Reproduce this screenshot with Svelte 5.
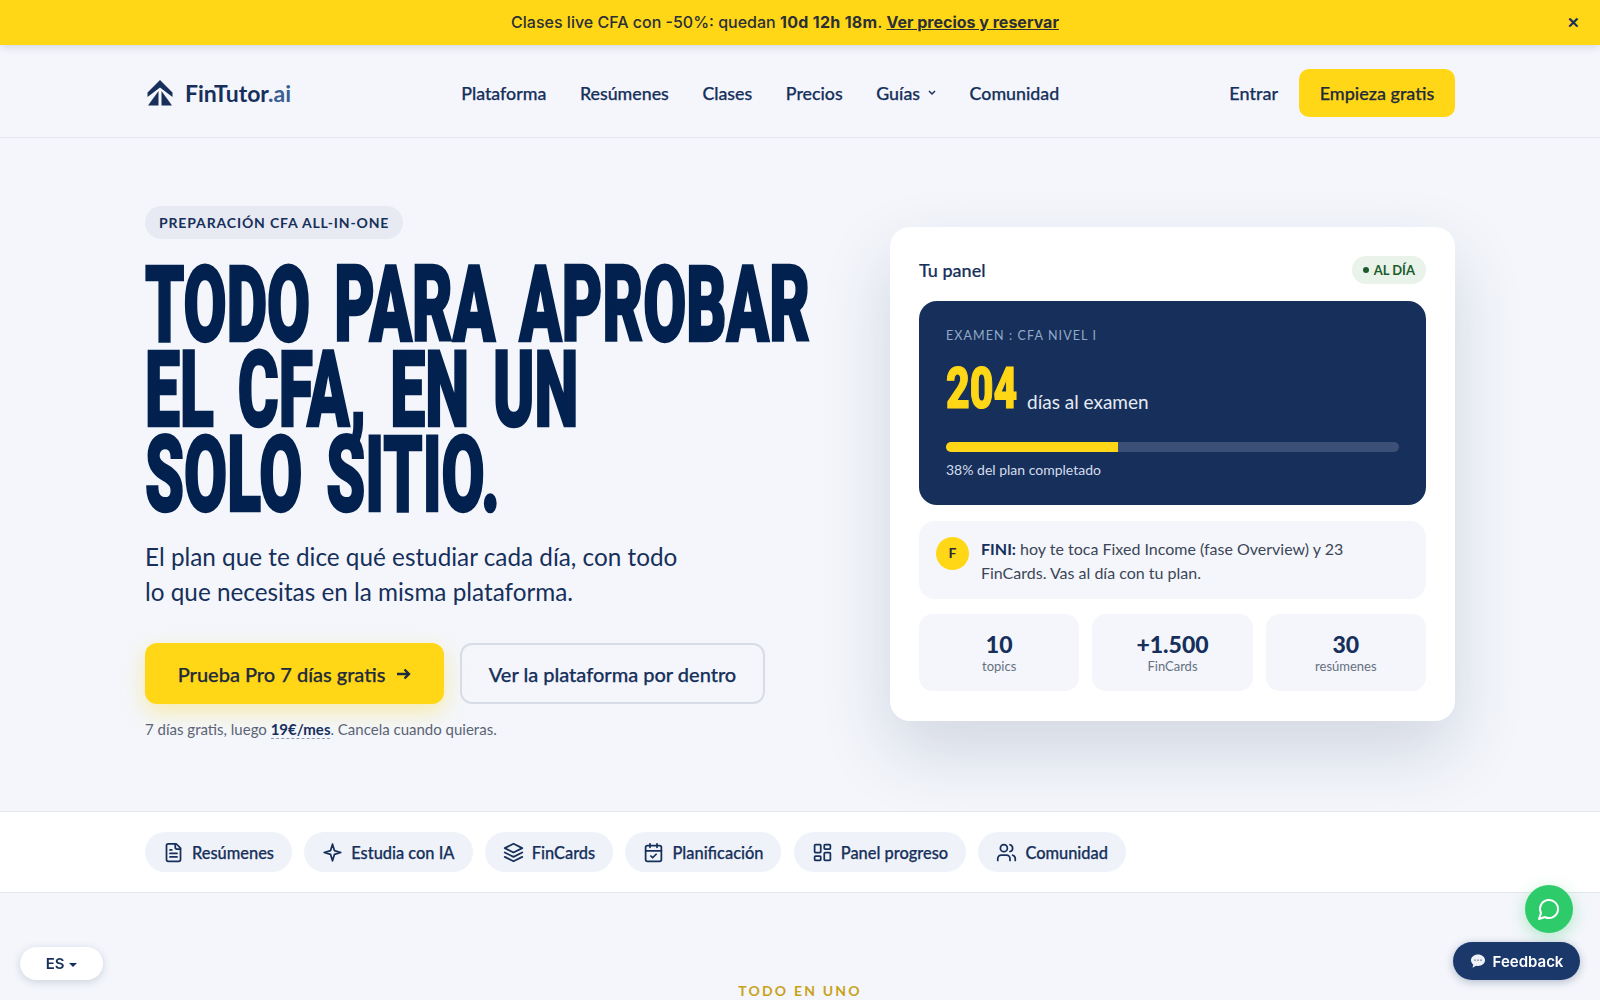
<script>
	const links = ['Plataforma', 'Resúmenes', 'Clases', 'Precios', 'Guías', 'Comunidad'];
	const stats = [
		{ value: '10', label: 'topics' },
		{ value: '+1.500', label: 'FinCards' },
		{ value: '30', label: 'resúmenes' }
	];
	const features = [
		{ label: 'Resúmenes', icon: 'doc' },
		{ label: 'Estudia con IA', icon: 'spark' },
		{ label: 'FinCards', icon: 'layers' },
		{ label: 'Planificación', icon: 'calendar' },
		{ label: 'Panel progreso', icon: 'grid' },
		{ label: 'Comunidad', icon: 'users' }
	];
</script>

<div class="banner">
	<p>Clases live CFA con -50%: quedan <b>10d 12h 18m</b>. <a href="#top">Ver precios y reservar</a></p>
	<span class="close">✕</span>
</div>

<nav class="nav">
	<a class="logo" href="#top">
		<svg width="26" height="26" viewBox="0 0 26 26" fill="#16305b">
			<path d="M13 0 25.500 12.500V17L13 7.500.5 17V12.500Z" />
			<path d="M11.500 11V25.500H1ZM14.500 11V25.500H25Z" />
		</svg>
		<span>FinTutor<em>.ai</em></span>
	</a>
	<ul class="links">
		{#each links as link}
			<li>
				{link}
				{#if link === 'Guías'}
					<svg width="8" height="6" viewBox="0 0 8 6" fill="none" stroke="#16305b" stroke-width="1.5"><path d="m1 1 3 3 3-3" /></svg>
				{/if}
			</li>
		{/each}
	</ul>
	<div class="nav-right">
		<span>Entrar</span>
		<a class="nav-cta" href="#top">Empieza gratis</a>
	</div>
</nav>

<main class="hero">
	<section class="copy">
		<span class="tag">PREPARACIÓN CFA ALL-IN-ONE</span>
		<h1>TODO PARA APROBAR<br />EL CFA, EN UN<br />SOLO SITIO.</h1>
		<p class="lead">El plan que te dice qué estudiar cada día, con todo<br />lo que necesitas en la misma plataforma.</p>
		<div class="actions">
			<a class="btn primary" href="#top">
				Prueba Pro 7 días gratis
				<svg width="14" height="12" viewBox="0 0 14 12" fill="none" stroke="#1f2a3a" stroke-width="2.400"><path d="M0 6h12M7.500 1.500 12 6 7.500 10.500" /></svg>
			</a>
			<a class="btn ghost" href="#top">Ver la plataforma por dentro</a>
		</div>
		<p class="note">7 días gratis, luego <b>19€/mes</b>. Cancela cuando quieras.</p>
	</section>

	<aside class="card">
		<header>
			<span>Tu panel</span>
			<small><i></i>AL DÍA</small>
		</header>
		<div class="exam">
			<p class="exam-title">EXAMEN : CFA NIVEL I</p>
			<p class="count"><b>204</b> días al examen</p>
			<div class="track"><div class="fill" style="width: 38%"></div></div>
			<p class="done">38% del plan completado</p>
		</div>
		<div class="fini">
			<span class="avatar">F</span>
			<p><b>FINI:</b> hoy te toca Fixed Income (fase Overview) y 23 FinCards. Vas al día con tu plan.</p>
		</div>
		<div class="stats">
			{#each stats as s}
				<div>
					<b>{s.value}</b>
					<span>{s.label}</span>
				</div>
			{/each}
		</div>
	</aside>
</main>

<div class="strip">
	{#each features as f}
		<span class="chip">
			<svg width="21" height="21" viewBox="0 0 24 24" fill="none" stroke="#16305b" stroke-width="2" stroke-linecap="round" stroke-linejoin="round">
				{#if f.icon === 'doc'}
					<path d="M15 2H6a2 2 0 0 0-2 2v16a2 2 0 0 0 2 2h12a2 2 0 0 0 2-2V7Z" /><path d="M14 2v4a2 2 0 0 0 2 2h4M10 9H8M16 13H8M16 17H8" />
				{:else if f.icon === 'spark'}
					<path d="M12 2.500 14.200 9.800 21.500 12 14.200 14.200 12 21.500 9.800 14.200 2.500 12 9.800 9.800Z" />
				{:else if f.icon === 'layers'}
					<path d="M12 2 2 7l10 5 10-5-10-5zM2 17l10 5 10-5M2 12l10 5 10-5" />
				{:else if f.icon === 'calendar'}
					<rect x="3" y="4" width="18" height="18" rx="2" /><path d="M16 2v4M8 2v4M3 10h18m-12 6 2 2 4-4" />
				{:else if f.icon === 'grid'}
					<rect x="3" y="3" width="7" height="9" rx="1" /><rect x="14" y="3" width="7" height="5" rx="1" /><rect x="14" y="12" width="7" height="9" rx="1" /><rect x="3" y="16" width="7" height="5" rx="1" />
				{:else}
					<path d="M16 21v-2a4 4 0 0 0-4-4H6a4 4 0 0 0-4 4v2" /><circle cx="9" cy="7" r="4" /><path d="M22 21v-2a4 4 0 0 0-3-3.870M16 3.130a4 4 0 0 1 0 7.750" />
				{/if}
			</svg>
			{f.label}
		</span>
	{/each}
</div>

<section class="next">
	<p>TODO EN UNO</p>
</section>

<button class="lang">ES <i></i></button>
<button class="chat" aria-label="Chat">
	<svg width="24" height="24" viewBox="0 0 24 24" fill="none" stroke="#fff" stroke-width="2" stroke-linecap="round" stroke-linejoin="round"><path d="M7.900 20A9 9 0 1 0 4 16.100L2 22Z" /></svg>
</button>
<button class="feedback">
	<svg width="16" height="16" viewBox="0 0 16 16"><path d="M8 1.500c3.900 0 7 2.500 7 5.700s-3.100 5.700-7 5.700c-.7 0-1.300-.1-1.900-.2L2.500 14.800l.8-3.300C1.900 10.400 1 8.900 1 7.200 1 4 4.100 1.500 8 1.500Z" fill="#eef1f6" /><circle cx="5" cy="7.200" r=".9" fill="#8a94a6" /><circle cx="8" cy="7.200" r=".9" fill="#8a94a6" /><circle cx="11" cy="7.200" r=".9" fill="#8a94a6" /></svg>
	Feedback
</button>

<style>
	:global(body) {
		margin: 0;
		background: #f4f6fb;
		color: #16305b;
		font-family: 'Lato', 'Liberation Sans', sans-serif;
	}

	p {
		margin: 0;
	}

	a {
		color: inherit;
		text-decoration: none;
	}

	.banner {
		height: 45px;
		box-sizing: border-box;
		padding: 0 30px 2px 0;
		background: #ffd717;
		box-shadow: 0 2px 8px rgba(20, 30, 60, 0.14);
		display: flex;
		align-items: center;
		justify-content: center;
		position: relative;
		font-family: 'Inter', sans-serif;
		font-size: 16px;
		font-weight: 500;
		color: #2b2f36;
	}

	.banner b {
		font-weight: 700;
		letter-spacing: 0.3px;
	}

	.banner a {
		font-weight: 700;
		text-decoration: underline;
	}

	.close {
		position: absolute;
		right: 20px;
		top: 13px;
		font-size: 15px;
		font-weight: 900;
		color: #16305b;
	}

	.nav {
		height: 93px;
		box-sizing: border-box;
		border-bottom: 1px solid #e4e7ee;
		padding: 4px 145px 0;
		display: flex;
		align-items: center;
		justify-content: space-between;
	}

	.logo {
		display: flex;
		align-items: center;
		gap: 12px;
		margin-left: 2px;
		font-size: 23px;
		font-weight: 700;
	}

	.logo em {
		font-style: normal;
		color: #3a5f95;
	}

	.links {
		list-style: none;
		margin: 0;
		padding: 0;
		display: flex;
		gap: 33.6px;
		font-size: 17.8px;
		font-weight: 500;
		-webkit-text-stroke: 0.25px #16305b;
	}

	.links li {
		display: flex;
		align-items: center;
		gap: 8px;
	}

	.nav-right {
		display: flex;
		align-items: center;
		gap: 21px;
		font-size: 18px;
		font-weight: 500;
		-webkit-text-stroke: 0.25px currentColor;
	}

	.nav-cta {
		background: #ffd717;
		border-radius: 10px;
		height: 48px;
		width: 156px;
		display: flex;
		align-items: center;
		justify-content: center;
		color: #1f2a3a;
	}

	.hero {
		box-sizing: border-box;
		height: 673px;
		padding: 0 145px;
		display: grid;
		grid-template-columns: minmax(0, 1fr) 565px;
		align-items: center;
	}

	.copy {
		margin-bottom: 5px;
	}

	.tag {
		display: inline-block;
		background: #e7eaf2;
		border-radius: 17px;
		height: 33px;
		line-height: 33px;
		padding: 0 14px;
		font-size: 14px;
		font-weight: 700;
		letter-spacing: 0.85px;
	}

	h1 {
		margin: 24px 0 0;
		font-family: 'Roboto', 'Liberation Sans', sans-serif;
		font-weight: 900;
		font-size: 105px;
		line-height: 85px;
		word-spacing: 14px;
		color: #02214f;
		-webkit-text-stroke: 2.5px #02214f;
		white-space: nowrap;
		transform: scaleX(0.595);
		transform-origin: 0 0;
	}

	.lead {
		margin-top: 21px;
		font-size: 24.3px;
		line-height: 35px;
	}

	.actions {
		margin-top: 34px;
		display: flex;
		gap: 16px;
	}

	.btn {
		box-sizing: border-box;
		height: 61px;
		border-radius: 12px;
		display: flex;
		align-items: center;
		justify-content: center;
		font-size: 20px;
		font-weight: 500;
		-webkit-text-stroke: 0.25px currentColor;
	}

	.primary {
		width: 299px;
		background: #ffd717;
		color: #1f2a3a;
		box-shadow: 0 8px 22px rgba(255, 215, 23, 0.35);
		gap: 12px;
	}

	.ghost {
		width: 305px;
		border: 2px solid #d8dce6;
	}

	.note {
		margin-top: 16px;
		font-size: 15px;
		color: #5a6474;
	}

	.note b {
		font-weight: 700;
		color: #16305b;
		border-bottom: 1px dashed #8c99b0;
	}

	.card {
		background: #fff;
		border-radius: 20px;
		box-sizing: border-box;
		padding: 29px;
		height: 494px;
		margin-bottom: 2px;
		box-shadow: 0 30px 70px rgba(22, 48, 91, 0.16);
	}

	.card header {
		height: 30px;
		margin-top: -1px;
		display: flex;
		align-items: center;
		justify-content: space-between;
		font-size: 18px;
		font-weight: 500;
		-webkit-text-stroke: 0.2px #16305b;
	}

	.card small {
		background: #e9f3ea;
		color: #1d5b2c;
		height: 28px;
		border-radius: 14px;
		padding: 0 11px;
		display: flex;
		align-items: center;
		gap: 5px;
		font-size: 13px;
		font-weight: 700;
		-webkit-text-stroke: 0;
	}

	.card small i {
		width: 6px;
		height: 6px;
		border-radius: 50%;
		background: #1d5b2c;
	}

	.exam {
		margin-top: 16px;
		height: 204px;
		box-sizing: border-box;
		background: #16305b;
		border-radius: 18px;
		padding: 27px;
		color: #fff;
	}

	.exam-title {
		font-size: 12.5px;
		letter-spacing: 1.1px;
		color: #93a8c8;
	}

	.count {
		margin-top: 18px;
		display: flex;
		align-items: flex-end;
		gap: 9px;
		font-size: 19px;
		color: #e6ebf4;
		height: 52px;
	}

	.count b {
		width: 72px;
		flex: none;
		margin-bottom: -2px;
		font-family: 'Roboto', 'Liberation Sans', sans-serif;
		font-weight: 900;
		font-size: 57px;
		line-height: 52px;
		color: #ffd717;
		-webkit-text-stroke: 1.2px #ffd717;
		transform: scaleX(0.72);
		transform-origin: 0 0;
	}

	.track {
		margin-top: 29px;
		height: 10px;
		border-radius: 5px;
		background: #3c5077;
		overflow: hidden;
	}

	.fill {
		height: 100%;
		background: #ffd717;
	}

	.done {
		margin-top: 9px;
		font-size: 14px;
		color: #d5dceb;
	}

	.fini {
		margin-top: 16px;
		height: 78px;
		box-sizing: border-box;
		background: #f4f6fb;
		border-radius: 16px;
		padding: 16px 17px;
		display: flex;
		gap: 12px;
		font-size: 16px;
		line-height: 24px;
		color: #3c4656;
	}

	.fini b {
		font-weight: 700;
		color: #16305b;
	}

	.avatar {
		flex: none;
		width: 33px;
		height: 33px;
		border-radius: 50%;
		background: #ffd717;
		display: flex;
		align-items: center;
		justify-content: center;
		font-size: 14px;
		font-weight: 700;
		color: #1f2a3a;
	}

	.stats {
		margin-top: 15px;
		display: grid;
		grid-template-columns: repeat(3, 1fr);
		gap: 13px;
	}

	.stats div {
		height: 77px;
		background: #f4f6fb;
		border-radius: 14px;
		display: flex;
		flex-direction: column;
		align-items: center;
		justify-content: center;
	}

	.stats b {
		font-size: 23px;
		line-height: 28px;
		font-weight: 900;
	}

	.stats span {
		font-size: 13px;
		color: #667082;
	}

	.strip {
		box-sizing: border-box;
		height: 82px;
		background: #fff;
		border-top: 1px solid #e4e7ee;
		border-bottom: 1px solid #e4e7ee;
		padding: 0 145px;
		display: flex;
		align-items: center;
		gap: 12.3px;
	}

	.chip {
		height: 40px;
		border-radius: 20px;
		background: #eff2f8;
		padding: 0 18px;
		display: flex;
		align-items: center;
		gap: 8px;
		font-size: 16.4px;
		font-weight: 500;
		-webkit-text-stroke: 0.25px #16305b;
	}

	.next {
		padding-top: 89px;
		text-align: center;
		font-size: 14px;
		font-weight: 700;
		letter-spacing: 2.2px;
		color: #c9a21a;
	}

	button {
		border: 0;
		position: fixed;
		font-family: 'Inter', sans-serif;
	}

	.lang {
		left: 20px;
		bottom: 20px;
		width: 83px;
		height: 33px;
		border-radius: 17px;
		background: #fff;
		box-shadow: 0 2px 8px rgba(22, 48, 91, 0.18);
		font-size: 15px;
		font-weight: 600;
		color: #16305b;
	}

	.lang i {
		display: inline-block;
		border: 4px solid transparent;
		border-top-color: #16305b;
		border-bottom: 0;
		vertical-align: 2px;
		margin-left: 1px;
	}

	.chat {
		right: 27px;
		bottom: 67px;
		width: 48px;
		height: 48px;
		border-radius: 50%;
		background: #2ecb6b;
		box-shadow: 0 4px 16px rgba(46, 203, 107, 0.35);
		display: flex;
		align-items: center;
		justify-content: center;
	}

	.feedback {
		right: 20px;
		bottom: 20px;
		width: 127px;
		height: 38px;
		border-radius: 19px;
		background: #1b386b;
		box-shadow: 0 2px 8px rgba(22, 48, 91, 0.3);
		color: #fff;
		font-size: 15px;
		font-weight: 600;
		display: flex;
		align-items: center;
		justify-content: center;
		gap: 7px;
	}
</style>
